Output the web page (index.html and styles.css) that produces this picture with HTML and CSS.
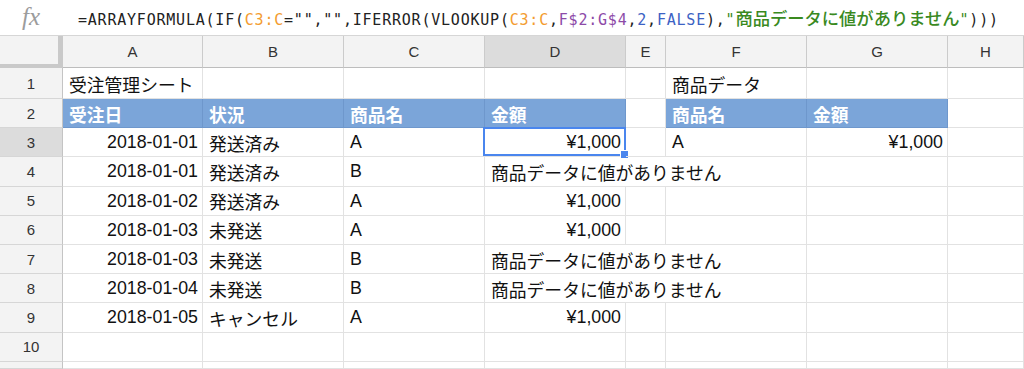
FILE: index.html
```html
<!DOCTYPE html>
<html lang="ja">
<head>
<meta charset="utf-8">
<title>受注管理シート</title>
<link rel="stylesheet" href="styles.css">
</head>
<body>
<div class="fbar">
  <span class="fx">fx</span>
  <div class="formula">=ARRAYFORMULA(IF(<span class="ref1">C3:C</span>="","",IFERROR(VLOOKUP(<span class="ref1">C3:C</span>,<span class="ref2">F$2:G$4</span>,<span class="num">2</span>,<span class="num">FALSE</span>),<span class="str">"<span class="jp">商品データに値がありません</span>"</span>)))</div>
</div>
<div class="sheet">
  <div class="corner"></div>
  <div class="ch">A</div><div class="ch">B</div><div class="ch">C</div><div class="ch act">D</div><div class="ch">E</div><div class="ch">F</div><div class="ch">G</div><div class="ch">H</div>

  <div class="rh">1</div>
  <div class="c">受注管理シート</div><div class="c"></div><div class="c"></div><div class="c"></div><div class="c"></div><div class="c">商品データ</div><div class="c"></div><div class="c"></div>

  <div class="rh">2</div>
  <div class="c hd">受注日</div><div class="c hd">状況</div><div class="c hd">商品名</div><div class="c hd">金額</div><div class="c"></div><div class="c hd">商品名</div><div class="c hd">金額</div><div class="c"></div>

  <div class="rh act">3</div>
  <div class="c r">2018-01-01</div><div class="c">発送済み</div><div class="c">A</div><div class="c r sel">¥1,000<span class="selbox"><span class="handle"></span></span></div><div class="c"></div><div class="c">A</div><div class="c r">¥1,000</div><div class="c"></div>

  <div class="rh">4</div>
  <div class="c r">2018-01-01</div><div class="c">発送済み</div><div class="c">B</div><div class="c span3">商品データに値がありません</div><div class="c"></div><div class="c"></div>

  <div class="rh">5</div>
  <div class="c r">2018-01-02</div><div class="c">発送済み</div><div class="c">A</div><div class="c r">¥1,000</div><div class="c"></div><div class="c"></div><div class="c"></div><div class="c"></div>

  <div class="rh">6</div>
  <div class="c r">2018-01-03</div><div class="c">未発送</div><div class="c">A</div><div class="c r">¥1,000</div><div class="c"></div><div class="c"></div><div class="c"></div><div class="c"></div>

  <div class="rh">7</div>
  <div class="c r">2018-01-03</div><div class="c">未発送</div><div class="c">B</div><div class="c span3">商品データに値がありません</div><div class="c"></div><div class="c"></div>

  <div class="rh">8</div>
  <div class="c r">2018-01-04</div><div class="c">未発送</div><div class="c">B</div><div class="c span3">商品データに値がありません</div><div class="c"></div><div class="c"></div>

  <div class="rh">9</div>
  <div class="c r">2018-01-05</div><div class="c">キャンセル</div><div class="c">A</div><div class="c r">¥1,000</div><div class="c"></div><div class="c"></div><div class="c"></div><div class="c"></div>

  <div class="rh">10</div>
  <div class="c"></div><div class="c"></div><div class="c"></div><div class="c"></div><div class="c"></div><div class="c"></div><div class="c"></div><div class="c"></div>

  <div class="rh"></div>
  <div class="c"></div><div class="c"></div><div class="c"></div><div class="c"></div><div class="c"></div><div class="c"></div><div class="c"></div><div class="c"></div>
</div>
</body>
</html>
```
FILE: styles.css
```css
html, body {
  margin: 0;
  padding: 0;
}
body {
  width: 1024px;
  height: 369px;
  overflow: hidden;
  background: #fff;
  font-family: "Liberation Sans", "Noto Sans CJK JP", sans-serif;
  color: #111;
}
.fbar {
  height: 35px;
  border-bottom: 1px solid #d6d6d6;
  display: flex;
  align-items: center;
  padding-left: 22px;
}
.fx {
  width: 56px;
  font-family: "Liberation Serif", "DejaVu Serif", serif;
  font-style: italic;
  font-size: 25px;
  color: #9c9c9c;
  line-height: 1;
  margin-top: -2px;
}
.formula {
  font-family: "DejaVu Sans Mono", monospace;
  font-size: 15px;
  letter-spacing: 0.78px;
  color: #222;
  white-space: nowrap;
}
.ref1 { color: #f39c2f; }
.ref2 { color: #8d4aa8; }
.num { color: #3c62c4; }
.str { color: #3a8a1f; }
.jp {
  font-family: "Noto Sans CJK JP", sans-serif;
  font-size: 17.3px;
  letter-spacing: 0;
  font-weight: 500;
}
.sheet {
  display: grid;
  grid-template-columns: 63px 140px 141px 141px 141px 40px 141px 141px 76px;
  grid-template-rows: 32px 31px repeat(9, 29.2px) 7px;
}
.sheet > div {
  box-sizing: border-box;
}
.corner {
  background: #f3f3f3;
  border-right: 5px solid #c9c9c9;
  border-bottom: 4px solid #c9c9c9;
}
.ch {
  background: #f3f3f3;
  border-right: 1px solid #cbcbcb;
  border-bottom: 1px solid #bdbdbd;
  display: flex;
  align-items: center;
  justify-content: center;
  font-size: 15px;
  color: #333;
}
.rh {
  background: #f3f3f3;
  border-right: 1px solid #c4c4c4;
  border-bottom: 1px solid #d6d6d6;
  display: flex;
  align-items: center;
  justify-content: center;
  font-size: 15px;
  color: #333;
}
.act {
  background: #dcdcdc;
}
.c {
  border-right: 1px solid #e2e2e2;
  border-bottom: 1px solid #e2e2e2;
  display: flex;
  align-items: center;
  padding: 1px 5px 0 6px;
  font-size: 17.8px;
  white-space: nowrap;
  position: relative;
}
.c.r {
  justify-content: flex-end;
  padding-right: 4px;
}
.c.hd {
  background: #7ba5d9;
  border-right-color: #6e97cc;
  border-bottom-color: #6e97cc;
  color: #fff;
  font-weight: bold;
}
.span3 {
  grid-column: span 3;
}
.selbox {
  position: absolute;
  left: -2px;
  top: -1px;
  right: -1px;
  bottom: 0;
  border: 2px solid #4a86ee;
}
.handle {
  position: absolute;
  right: -5px;
  bottom: -5px;
  width: 7px;
  height: 7px;
  background: #4a86ee;
  border: 1px solid #fff;
}
```
